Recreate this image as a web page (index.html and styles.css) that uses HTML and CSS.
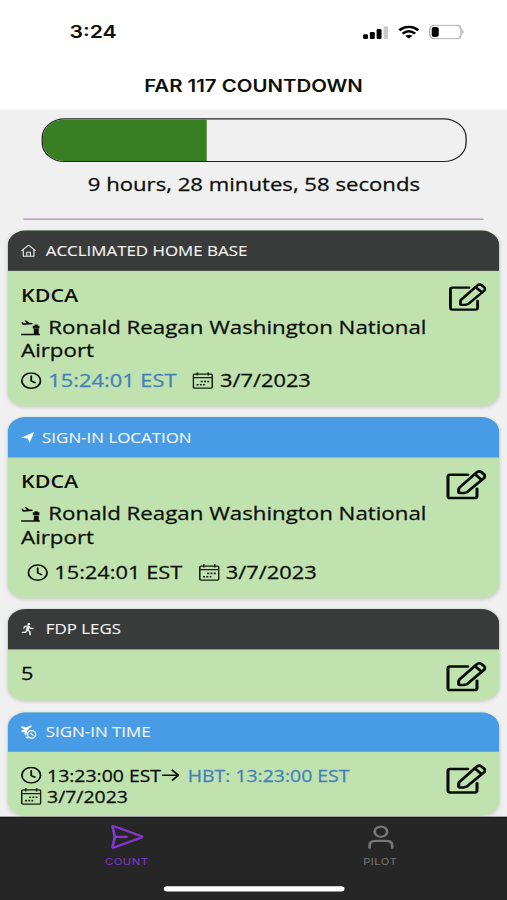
FILE: index.html
```html
<!DOCTYPE html>
<html lang="en">
<head>
<meta charset="utf-8">
<title>FAR 117 Countdown</title>
<link rel="stylesheet" href="styles.css">
</head>
<body>
<svg class="defs" width="0" height="0" aria-hidden="true">
  <symbol id="edit" viewBox="0 0 29.5 27">
    <g fill="none" stroke="#080c07" stroke-width="2.2" stroke-linejoin="round" stroke-linecap="round">
      <path d="M15.8 4.7H3Q1.5 4.7 1.5 6.2V23.7Q1.5 25.3 3 25.3H20.8Q22.4 25.3 22.4 23.7V17.2"/>
      <path d="M9.6 16.2 22.2 2.7Q23.9 .9 25.7 2.6L27.5 4.4Q29 6 27.4 7.7L15.2 20.1 12.9 20.9H9.6Q9.2 20.9 9.2 20.4V17.6Z"/>
      <path d="M20.9 4.3 25.7 9.2"/>
    </g>
  </symbol>
  <symbol id="clock" viewBox="0 0 16 16">
    <g fill="none" stroke="#0c120a" stroke-width="1.4" stroke-linecap="round" stroke-linejoin="round">
      <circle cx="8" cy="8" r="7.2"/><path d="M8 3.7V8.3L10.9 9.9"/>
    </g>
  </symbol>
  <symbol id="calendar" viewBox="0 0 16 16">
    <g fill="none" stroke="#172012" stroke-width="1.2">
      <rect x=".7" y="1.8" width="14.6" height="13.2" rx="1"/><path d="M.7 5.2H15.3M3.8 .2V3.2M12.2 .2V3.2"/>
      <path d="M6.4 8.7H13M3.2 11.8H9.6" stroke-width="1.5" stroke-dasharray="1.5 1"/>
    </g>
  </symbol>
  <symbol id="airport" viewBox="0 0 15 16">
    <g fill="#0c120a">
      <path d="M.3 12.9H14.7V14.4H.3ZM10 8.4H13.8V13H10ZM9.2 5.4H14.3V8H9.2ZM10.6 4.4H13V6H10.6Z"/>
      <path d="M.4 2.1 1.2 1.9 2.5 3.2 4.6 3.1 2.9 .6 4.1 .5 6.6 2.7 8.6 2.9Q9.8 3.4 8.7 4.1L2.3 4.8Q1.4 4.8 1.1 4Z"/>
    </g>
  </symbol>
</svg>
<div class="screen">
  <header class="top">
    <div class="status">
      <span class="time">3:24</span>
      <span class="indicators">
        <svg class="signal" viewBox="0 0 20 13"><g fill="#000"><rect x=".3" y="8.2" width="3.8" height="4.4" rx="1.2"/><rect x="5.5" y="6" width="3.8" height="6.6" rx="1.1"/><rect x="10.7" y="3.3" width="3.8" height="9.3" rx="1.1"/></g><rect x="16" y=".5" width="3.6" height="12.1" rx="1.1" fill="#cbcbcb"/></svg>
        <svg class="wifi" viewBox="0 0 16 12"><g fill="none" stroke="#000" stroke-width="2.2"><path d="M.9 4.2Q8-2.2 15.1 4.2M3.4 7.2Q8 3.1 12.6 7.2"/></g><path d="M5.4 9.2Q8 7.2 10.6 9.2L8 11.8Z"/></svg>
        <svg class="battery" viewBox="0 0 28 14"><rect x=".6" y=".6" width="24" height="12.8" rx="3.8" fill="none" stroke="#aaa"/><rect x="2.1" y="2.3" width="5.4" height="9.4" rx="2.1"/><path d="M25.7 4.9Q27.5 7 25.7 9Z" fill="#999"/></svg>
      </span>
    </div>
    <h1>FAR 117 COUNTDOWN</h1>
  </header>
  <main>
    <div class="progress"><div class="fill"></div></div>
    <p class="remaining">9 hours, 28 minutes, 58 seconds</p>
    <hr>
    <section class="card home">
      <h2 class="dark"><svg class="hicon" viewBox="0 0 12 12"><g fill="none" stroke="#e8e8e8" stroke-width=".9" stroke-linejoin="round"><path d="M.5 6.3 6 .9 11.5 6.3M1.9 5.2V11.3H10.1V5.2M4.6 11.2V7.6H7.4V11.2"/></g></svg><span>ACCLIMATED HOME BASE</span></h2>
      <div class="body">
        <svg class="edit small"><use href="#edit"/></svg>
        <h3>KDCA</h3>
        <p class="airport"><svg class="plane"><use href="#airport"/></svg>Ronald Reagan Washington National Airport</p>
        <div class="row"><svg class="icon"><use href="#clock"/></svg><span class="link clock">15:24:01 EST</span><svg class="icon"><use href="#calendar"/></svg><span>3/7/2023</span></div>
      </div>
    </section>
    <section class="card location">
      <h2 class="blue"><svg class="hicon arrow" viewBox="0 0 11 12"><path fill="#fff" d="M.3 6.6 10.8 .8 7.2 11.5 5.5 7.2Z"/></svg><span>SIGN-IN LOCATION</span></h2>
      <div class="body">
        <svg class="edit"><use href="#edit"/></svg>
        <h3>KDCA</h3>
        <p class="airport"><svg class="plane"><use href="#airport"/></svg>Ronald Reagan Washington National Airport</p>
        <div class="row inset"><svg class="icon"><use href="#clock"/></svg><span class="clock">15:24:01 EST</span><svg class="icon"><use href="#calendar"/></svg><span>3/7/2023</span></div>
      </div>
    </section>
    <section class="card legs">
      <h2 class="dark"><svg class="hicon" viewBox="0 0 12 12"><circle cx="6.2" cy="1.2" r="1.1" fill="#eee"/><path fill="none" stroke="#eee" stroke-width="1.2" stroke-linecap="round" stroke-linejoin="round" d="M2.4 5 3.2 3.4 5.9 3 7.3 5.2 9.3 5.4M5.7 3.3 4.7 6.6 6.9 8.3 7.2 11.4M4.5 7 3.7 9 1.2 9"/><path fill="#eee" d="M4.6 3H6.8L6.2 7H4.2Z"/></svg><span>FDP LEGS</span></h2>
      <div class="body">
        <svg class="edit"><use href="#edit"/></svg>
        <p class="count">5</p>
      </div>
    </section>
    <section class="card signin">
      <h2 class="blue"><svg class="hicon flight" viewBox="0 0 12 12" preserveAspectRatio="none"><path fill="#fff" d="M0 1.8 1 1 4.2 2 7.2 .4Q9.2-.1 8.3 1.2L6.2 3.2 4.9 5 4.2 8.6 3.2 8.9 2.8 5.9 1.3 6.2 .2 5 2.4 3.8Z"/><circle cx="8.3" cy="8" r="3.2" fill="none" stroke="#fff" stroke-width="1.1"/><path d="M7.2 6.8 9.7 9M3.8 10.2 5.8 11.4" fill="none" stroke="#fff" stroke-width=".9"/></svg><span>SIGN-IN TIME</span></h2>
      <div class="body">
        <svg class="edit"><use href="#edit"/></svg>
        <div class="row tight"><svg class="icon"><use href="#clock"/></svg><span>13:23:00 EST</span><svg class="to" viewBox="0 0 14 14"><path d="M.5 7H13M8.2 2 13.2 7 8.2 12" fill="none" stroke="#0c120a" stroke-width="1.5"/></svg><span class="link">HBT: 13:23:00 EST</span></div>
        <div class="row tight"><svg class="icon"><use href="#calendar"/></svg><span>3/7/2023</span></div>
      </div>
    </section>
  </main>
  <nav>
    <div class="tabs">
      <a class="tab active"><svg viewBox="0 0 26 24"><g fill="none" stroke="currentColor" stroke-width="2.1" stroke-linejoin="round" stroke-linecap="round"><path d="M1.6 2.6Q1.5 1.4 2.8 1.8L23.9 11.2Q24.8 11.8 23.9 12.4L2.8 21.8Q1.4 22.2 1.6 21L3.4 11.8Z"/><path d="M3.5 11.8H12.5"/></g></svg><span>COUNT</span></a>
      <a class="tab"><svg viewBox="0 0 26 24"><g fill="none" stroke="currentColor" stroke-width="2.1" stroke-linecap="round"><circle cx="13" cy="6.9" r="4.8"/><path d="M4.3 22V20Q4.3 15.5 8.8 15.5H17.2Q21.7 15.5 21.7 20V22"/></g></svg><span>PILOT</span></a>
    </div>
    <div class="homebar"></div>
  </nav>
</div>
</body>
</html>
```
FILE: styles.css
```css
* { box-sizing: border-box; margin: 0; padding: 0; }
html, body { width: 507px; height: 900px; overflow: hidden; background: #f0f0f0; }
.defs { display: none; }
/* 390 x 844 phone canvas, fitted to the window */
.screen {
  width: 390px; height: 844px;
  transform: scale(1.3, 1.06635); transform-origin: 0 0;
  display: flex; flex-direction: column; overflow: hidden;
  font: 400 16.8px/22.5px "Open Sans", "Noto Sans", sans-serif;
  color: #0c0f0a; background: #f0f0f0;
}
svg { display: block; flex: none; }
.top { height: 102.9px; flex: none; background: #fff; border-bottom: 1px solid #f4f4f4; font-family: Inter, sans-serif; }
.status { display: flex; justify-content: space-between; align-items: center; height: 60px; padding: 0 32.5px 0 53.5px; }
.time { font-size: 16.3px; font-weight: 600; padding-top: 1px; }
.indicators { display: flex; align-items: center; gap: 7px; }
.signal { width: 20px; height: 13px; }
.wifi { width: 17px; height: 12.5px; }
.battery { width: 28px; height: 14px; }
h1 { font-size: 15.7px; font-weight: 600; line-height: 22px; text-align: center; margin-top: 9.9px; }
main { height: 663.1px; flex: none; overflow: hidden; padding: 8px 5.6px 0 6.2px; -webkit-text-stroke: .25px currentColor; }
.progress { height: 41.5px; margin: 0 25px 0 25.8px; border: 1.1px solid #222; border-radius: 18px; overflow: hidden; }
.fill { width: 126.5px; height: 100%; background: #387e22; }
.remaining { font-size: 17.05px; text-align: center; margin-top: 9.3px; }
hr { border: 0; height: 1.4px; background: #ac70b2; margin: 20.7px 12px 10.1px; }
.card { border-radius: 14px; background: #bfe2af; overflow: hidden; margin-bottom: 10.8px; box-shadow: 0 1px 3px rgba(0,0,0,.14); }
.home { height: 164.2px; }
.location { height: 169.3px; }
.legs { height: 85.6px; }
.signin { height: 97.2px; }
h2 { height: 37.3px; display: flex; align-items: center; gap: 7px; padding-left: 10px; font-size: 13px; font-weight: 400; color: #f4f4f4; -webkit-text-stroke-width: .1px; }
.dark { background: #393b3a; }
.blue { background: #479ce5; }
.hicon { width: 12px; height: 12px; }
.arrow { width: 10.5px; margin-right: -1.3px; }
.flight { height: 13px; }
.body { padding: 8px 10px 0; }
.edit { float: right; width: 31.5px; height: 29px; margin: 3px 0 0 6px; }
.edit.small { width: 29.5px; height: 27px; margin-top: 3px; }
h3 { font-size: 16.5px; font-weight: 600; line-height: 30px; -webkit-text-stroke-width: 0; }
.airport { width: 340px; margin-top: 3.9px; font-size: 17.15px; }
.plane { display: inline-block; width: 15px; height: 16px; margin-right: 6px; vertical-align: -3px; }
.row { display: flex; align-items: center; height: 22.5px; margin-top: 5px; }
.row.inset { margin: 10.5px 0 0 4.5px; }
.icon { width: 16px; height: 16px; margin-right: 5px; }
.clock { margin-right: 12.5px; }
.link { color: #447fba; }
.count { line-height: 30px; }
.row.tight { height: 20.5px; margin: 0; font-size: 14.95px; }
.row.tight .icon { margin-right: 4px; }
.signin .body { padding-top: 11.5px; }
.signin .edit { margin-top: -.5px; }
.to { width: 14px; height: 14px; margin-right: 6.5px; }
nav { flex: 1; background: #262626; border-top: 1px solid #171717; }
.tabs { display: flex; height: 64px; }
.tab { flex: 1; display: flex; flex-direction: column; align-items: center; padding-top: 6px; color: #777; font: 400 8.7px/11px Inter, sans-serif; letter-spacing: .35px; }
.tab svg { width: 26px; height: 24px; margin-bottom: 6.5px; }
.active { color: #8536d2; }
.homebar { width: 139px; height: 5px; border-radius: 3px; background: #fff; margin: 0 auto; }
```
